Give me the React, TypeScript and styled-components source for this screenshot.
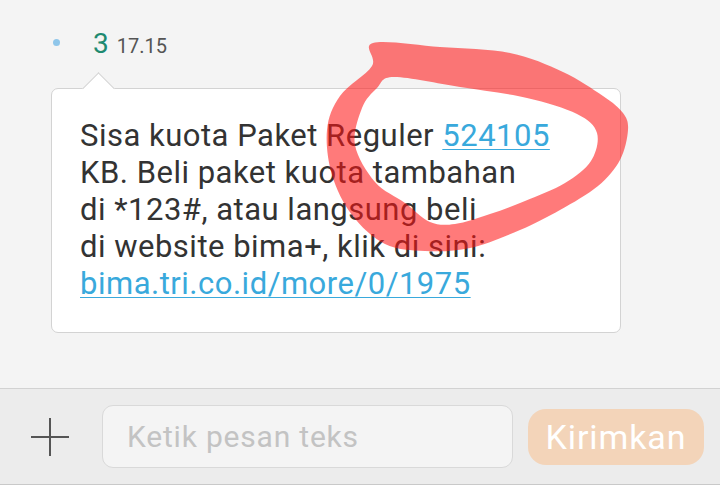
import React from "react";
import styled, { createGlobalStyle } from "styled-components";

const GlobalStyle = createGlobalStyle`
  html, body {
    margin: 0;
    padding: 0;
    background: #f4f4f4;
  }
  body {
    font-family: Roboto, "Noto Sans", "Liberation Sans", sans-serif;
  }
`;

const Screen = styled.div`
  position: relative;
  width: 720px;
  height: 485px;
  display: flex;
  flex-direction: column;
  background: #f4f4f4;
  overflow: hidden;
`;

const Thread = styled.div`
  flex: 1;
  padding: 29px 0 0 0;
  display: flex;
  flex-direction: column;
`;

const MessageHeader = styled.div`
  display: flex;
  align-items: center;
  height: 30px;
  padding-left: 53px;
`;

const StatusDot = styled.span`
  width: 7px;
  height: 7px;
  border-radius: 50%;
  background: #8fc6ea;
  margin: 0 33px 4px 0;
`;

const Sender = styled.span`
  font-size: 28px;
  line-height: 30px;
  color: #1f8a70;
`;

const Time = styled.span`
  font-size: 20px;
  line-height: 30px;
  color: #555;
  margin-left: 8px;
  padding-top: 3px;
`;

const Bubble = styled.div`
  position: relative;
  margin: 29px 0 0 51px;
  width: 570px;
  box-sizing: border-box;
  background: #fff;
  border: 1px solid #d3d3d3;
  border-radius: 7px;
  padding: 28px 10px 30px 28px;
  font-size: 31px;
  letter-spacing: 0.5px;
  line-height: 37px;
  color: #333;
  white-space: nowrap;

  &::before {
    content: "";
    position: absolute;
    left: 35px;
    top: -12px;
    width: 22px;
    height: 22px;
    background: #fff;
    border-left: 1px solid #d3d3d3;
    border-top: 1px solid #d3d3d3;
    transform: rotate(45deg);
  }
`;

const MsgLink = styled.span`
  color: #39a9dc;
  text-decoration: underline;
  text-decoration-thickness: 1px;
  text-underline-offset: 3px;
`;

const InputBar = styled.div`
  height: 97px;
  box-sizing: border-box;
  display: flex;
  align-items: center;
  background: #ececec;
  border-top: 1px solid #d2d2d2;
  border-bottom: 1px solid #c9c9c9;
  padding-left: 31px;
`;

const AddButton = styled.div`
  width: 38px;
  height: 38px;
  display: flex;
  margin-right: 33px;
`;

const TextField = styled.div`
  width: 411px;
  height: 63px;
  box-sizing: border-box;
  display: flex;
  align-items: center;
  padding-left: 24px;
  background: #f4f4f4;
  border: 1px solid #d9d9d9;
  border-radius: 11px;
  font-size: 30px;
  letter-spacing: 0.8px;
  color: #c3c3c3;
`;

const SendButton = styled.div`
  width: 176px;
  height: 56px;
  margin-left: 15px;
  box-sizing: border-box;
  display: flex;
  align-items: center;
  justify-content: center;
  background: #f3d4b9;
  border-radius: 18px;
  font-size: 34px;
  letter-spacing: 0.9px;
  color: #fff;
`;

const Overlay = styled.svg`
  position: absolute;
  left: 0;
  top: 0;
  pointer-events: none;
`;

type Pt = [number, number];

function smoothClosed(points: Pt[]): string {
  const n = points.length;
  let d = `M${points[0][0]},${points[0][1]}`;
  for (let i = 0; i < n; i++) {
    const p0 = points[(i - 1 + n) % n];
    const p1 = points[i];
    const p2 = points[(i + 1) % n];
    const p3 = points[(i + 2) % n];
    const c1x = p1[0] + (p2[0] - p0[0]) / 6;
    const c1y = p1[1] + (p2[1] - p0[1]) / 6;
    const c2x = p2[0] - (p3[0] - p1[0]) / 6;
    const c2y = p2[1] - (p3[1] - p1[1]) / 6;
    d += ` C${c1x.toFixed(1)},${c1y.toFixed(1)} ${c2x.toFixed(1)},${c2y.toFixed(1)} ${p2[0]},${p2[1]}`;
  }
  return d + " Z";
}

const outer: Pt[] = [
  [373, 43], [440, 47], [510, 53], [563, 72], [603, 96], [623, 113], [628, 130],
  [620, 160], [598, 186], [560, 210], [520, 230], [470, 248], [425, 251],
  [385, 244], [352, 215], [332, 175], [327, 130], [340, 96], [372, 66],
];

const inner: Pt[] = [
  [394, 77], [460, 87], [527, 98], [577, 114], [597, 133], [591, 161],
  [565, 183], [525, 201], [490, 214], [455, 224], [430, 222], [405, 203],
  [375, 182], [355, 145], [362, 108], [377, 88],
];

export default function App() {
  return (
    <>
      <GlobalStyle />
      <Screen>
        <Thread>
          <MessageHeader>
            <StatusDot />
            <Sender>3</Sender>
            <Time>17.15</Time>
          </MessageHeader>
          <Bubble>
            Sisa kuota Paket Reguler <MsgLink>524105</MsgLink>
            <br />
            KB. Beli paket kuota tambahan
            <br />
            di *123#, atau langsung beli
            <br />
            di website bima+, klik di sini:
            <br />
            <MsgLink>bima.tri.co.id/more/0/1975</MsgLink>
          </Bubble>
        </Thread>
        <InputBar>
          <AddButton>
            <svg width="38" height="38" viewBox="0 0 38 38">
              <path d="M19 0 V38 M0 19 H38" stroke="#555" strokeWidth="2" fill="none" />
            </svg>
          </AddButton>
          <TextField>Ketik pesan teks</TextField>
          <SendButton>Kirimkan</SendButton>
        </InputBar>
        <Overlay width="720" height="485" viewBox="0 0 720 485">
          <path
            d={`${smoothClosed(outer)} ${smoothClosed(inner)}`}
            fill="rgba(255,18,18,0.56)"
            fillRule="evenodd"
          />
        </Overlay>
      </Screen>
    </>
  );
}
